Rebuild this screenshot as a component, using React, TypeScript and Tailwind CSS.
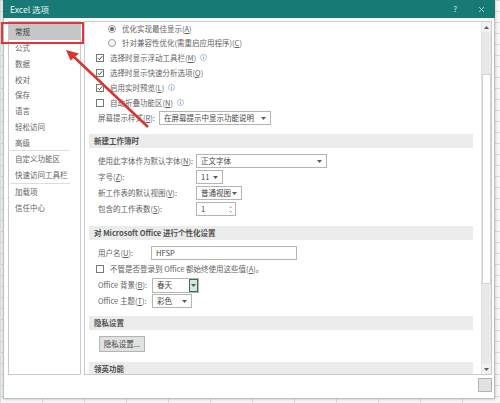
import { X } from 'lucide-react';

const navTop = ['公式', '数据', '校对', '保存', '语言', '轻松访问', '高级'];

function Caret() {
  return (
    <svg width="5" height="3" viewBox="0 0 5 3" className="shrink-0">
      <path d="M0 0h5L2.5 3z" fill="#5a5a5a" />
    </svg>
  );
}

function Check({ checked }: { checked?: boolean }) {
  return (
    <span className="flex h-[8px] w-[8px] shrink-0 items-center justify-center border border-[#777] bg-white">
      {checked && (
        <svg width="6" height="6" viewBox="0 0 6 6">
          <path d="M0.8 3.1 2.4 4.7 5.3 1.2" stroke="#444" strokeWidth="1" fill="none" />
        </svg>
      )}
    </span>
  );
}

function Radio({ on }: { on?: boolean }) {
  return (
    <span className="flex h-[8px] w-[8px] shrink-0 items-center justify-center rounded-full border border-[#999] bg-white">
      {on && <span className="h-[4px] w-[4px] rounded-full bg-[#666]" />}
    </span>
  );
}

function Info() {
  return (
    <svg width="7" height="7" viewBox="0 0 7 7" className="ml-[4px] shrink-0">
      <circle cx="3.5" cy="3.5" r="3" stroke="#8aa4c4" strokeWidth="0.7" fill="none" />
      <path d="M3.5 3v2.2M3.5 1.8v0.5" stroke="#6d8db5" strokeWidth="0.8" />
    </svg>
  );
}

function Select({ w, text }: { w: string; text: string }) {
  return (
    <div className={`flex h-[14px] items-center justify-between border border-[#b4b4b4] bg-white pl-[4px] pr-[4px] text-[#444] ${w}`}>
      <span>{text}</span>
      <Caret />
    </div>
  );
}

function Header({ children, className = '' }: { children: React.ReactNode; className?: string }) {
  return (
    <div className={`ml-[4px] mr-[8px] flex h-[14px] shrink-0 items-center bg-[#ebebeb] pl-[5px] font-semibold text-[#505050] ${className}`}>
      {children}
    </div>
  );
}

export default function App() {
  return (
    <div className="relative h-[403px] w-[500px] overflow-hidden bg-[#f6f7f6] bg-[linear-gradient(#d7ddd8_1px,transparent_1px),linear-gradient(90deg,#d7ddd8_1px,transparent_1px)] bg-size-[42px_11px] font-['Noto_Sans_CJK_SC',sans-serif] text-[7.5px] leading-none text-[#626262]">
      <div className="ml-[3px] flex h-[399px] w-[492px] flex-col shadow-[0_0_3px_rgba(0,0,0,0.25)]">
        <div className="flex h-[18px] shrink-0 items-center justify-between bg-[#177a74] pl-[7px] pr-[9px] text-white">
          <span className="text-[8.5px] text-[#eef7f6]">Excel 选项</span>
          <div className="flex items-center gap-[20px]">
            <span className="text-[8px] text-[#d7ecea]">?</span>
            <X size={9} strokeWidth={1.6} />
          </div>
        </div>

        <div className="flex flex-1 flex-col border-x border-b border-[#b7c2bd] bg-white">
          <div className="flex h-[357px] shrink-0 pl-[4px] pr-[2px] pt-[3px]">
            {/* left navigation */}
            <div className="flex w-[73px] shrink-0 flex-col border border-[#cacaca] pt-[1px]">
              <div className="flex h-[17px] items-center bg-[#c6c6c6] pl-[6px] text-[#3a3a3a]">常规</div>
              {navTop.map((n) => (
                <div key={n} className="flex h-[15.75px] items-center pl-[6px]">{n}</div>
              ))}
              <div className="ml-[1px] mr-[10px] h-px bg-[#dcdcdc]" />
              <div className="flex h-[15.75px] items-center pl-[6px]">自定义功能区</div>
              <div className="flex h-[15.75px] items-center pl-[6px]">快速访问工具栏</div>
              <div className="ml-[1px] mr-[10px] h-px bg-[#dcdcdc]" />
              <div className="flex h-[15.75px] items-center pl-[6px]">加载项</div>
              <div className="flex h-[15.75px] items-center pl-[6px]">信任中心</div>
            </div>

            {/* content panel */}
            <div className="ml-[3px] flex flex-1 overflow-hidden border border-[#cacaca]">
              <div className="flex flex-1 flex-col">
                <div className="flex h-[14px] shrink-0 items-center gap-[6px] pl-[23px]">
                  <Radio on />
                  <span>优化实现最佳显示(<u>A</u>)</span>
                </div>
                <div className="flex h-[14px] shrink-0 items-center gap-[6px] pl-[23px]">
                  <Radio />
                  <span>针对兼容性优化(需重启应用程序)(<u>C</u>)</span>
                </div>
                <div className="flex h-[15px] shrink-0 items-center gap-[6px] pl-[11px]">
                  <Check checked />
                  <span className="flex items-center">选择时显示浮动工具栏(<u>M</u>)<Info /></span>
                </div>
                <div className="flex h-[15px] shrink-0 items-center gap-[6px] pl-[11px]">
                  <Check checked />
                  <span>选择时显示快速分析选项(<u>Q</u>)</span>
                </div>
                <div className="flex h-[15px] shrink-0 items-center gap-[6px] pl-[11px]">
                  <Check checked />
                  <span className="flex items-center">启用实时预览(<u>L</u>)<Info /></span>
                </div>
                <div className="flex h-[15px] shrink-0 items-center gap-[6px] pl-[11px]">
                  <Check />
                  <span className="flex items-center">自动折叠功能区(<u>N</u>)<Info /></span>
                </div>
                <div className="flex h-[16px] shrink-0 items-center pl-[13px]">
                  <span className="w-[61px]">屏幕提示样式(<u>R</u>):</span>
                  <Select w="w-[112px]" text="在屏幕提示中显示功能说明" />
                </div>

                <Header className="mt-[8px]">新建工作簿时</Header>
                <div className="mt-[5px] flex h-[16px] shrink-0 items-center pl-[13px]">
                  <span className="w-[98px]">使用此字体作为默认字体(<u>N</u>):</span>
                  <Select w="w-[131px]" text="正文字体" />
                </div>
                <div className="flex h-[16px] shrink-0 items-center pl-[13px]">
                  <span className="w-[98px]">字号(<u>Z</u>):</span>
                  <Select w="w-[27px]" text="11" />
                </div>
                <div className="flex h-[16px] shrink-0 items-center pl-[13px]">
                  <span className="w-[98px]">新工作表的默认视图(<u>V</u>):</span>
                  <Select w="w-[46px]" text="普通视图" />
                </div>
                <div className="flex h-[16px] shrink-0 items-center pl-[13px]">
                  <span className="w-[98px]">包含的工作表数(<u>S</u>):</span>
                  <div className="flex h-[14px] w-[40px] items-center justify-between border border-[#b4b4b4] bg-white pl-[4px] pr-[2px] text-[#444]">
                    <span>1</span>
                    <svg width="5" height="9" viewBox="0 0 5 9">
                      <path d="M1 3 2.5 1.5 4 3M1 6 2.5 7.5 4 6" stroke="#8a8a8a" strokeWidth="0.7" fill="none" />
                    </svg>
                  </div>
                </div>

                <Header className="mt-[9px]">对 Microsoft Office 进行个性化设置</Header>
                <div className="mt-[5px] flex h-[16px] shrink-0 items-center pl-[13px]">
                  <span className="w-[53px]">用户名(<u>U</u>):</span>
                  <div className="flex h-[14px] w-[146px] items-center border border-[#b4b4b4] bg-white pl-[4px] text-[#444]">HFSP</div>
                </div>
                <div className="flex h-[16px] shrink-0 items-center gap-[6px] pl-[11px]">
                  <Check />
                  <span>不管是否登录到 Office 都始终使用这些值(<u>A</u>)。</span>
                </div>
                <div className="flex h-[16px] shrink-0 items-center pl-[13px]">
                  <span className="w-[54px]">Office 背景(<u>B</u>):</span>
                  <div className="flex h-[15px] w-[47px] items-center justify-between border border-[#b4b4b4] bg-white pl-[4px] text-[#444]">
                    <span>春天</span>
                    <span className="flex h-full w-[9px] items-center justify-center border border-[#3d6e55] bg-[#d3ead9]">
                      <Caret />
                    </span>
                  </div>
                </div>
                <div className="flex h-[16px] shrink-0 items-center pl-[13px]">
                  <span className="w-[54px]">Office 主题(<u>T</u>):</span>
                  <Select w="w-[40px]" text="彩色" />
                </div>

                <Header className="mt-[7px]">隐私设置</Header>
                <div className="mt-[6px] flex shrink-0 pl-[14px]">
                  <div className="flex h-[16px] w-[46px] items-center justify-center border border-[#b4b4b4] bg-[#e1e1e1] text-[#444]">隐私设置...</div>
                </div>
                <Header className="mt-[10px] mr-[3px]">领英功能</Header>
              </div>

              {/* scrollbar */}
              <div className="flex w-[10px] shrink-0 flex-col border-l border-[#e4e4e4] bg-[#e8e8e8]">
                <div className="flex h-[10px] shrink-0 items-center justify-center bg-[#f0f0f0]">
                  <svg width="5" height="3" viewBox="0 0 5 3"><path d="M0 3h5L2.5 0z" fill="#606060" /></svg>
                </div>
                <div className="h-[42px] shrink-0" />
                <div className="h-[210px] shrink-0 border border-[#d2d2d2] bg-white" />
                <div className="flex-1" />
                <div className="flex h-[10px] shrink-0 items-center justify-center bg-[#f0f0f0]">
                  <Caret />
                </div>
              </div>
            </div>
          </div>

          <div className="flex flex-1 justify-end pr-[2px] pt-[3px]">
            <div className="h-[14px] w-[14px] border border-[#b4b4b4] bg-[#e1e1e1]" />
          </div>
        </div>
      </div>

      {/* annotation overlay */}
      <div className="absolute left-[1px] top-[22px] h-[22px] w-[83px] border-2 border-[#e0363a]" />
      <svg className="pointer-events-none absolute inset-0" width="500" height="403" viewBox="0 0 500 403">
        <line x1="148" y1="127" x2="73" y2="56" stroke="#d9342f" strokeWidth="2.6" />
        <path d="M66 50 79 53.5 70.5 60.5z" fill="#d9342f" />
      </svg>
    </div>
  );
}
